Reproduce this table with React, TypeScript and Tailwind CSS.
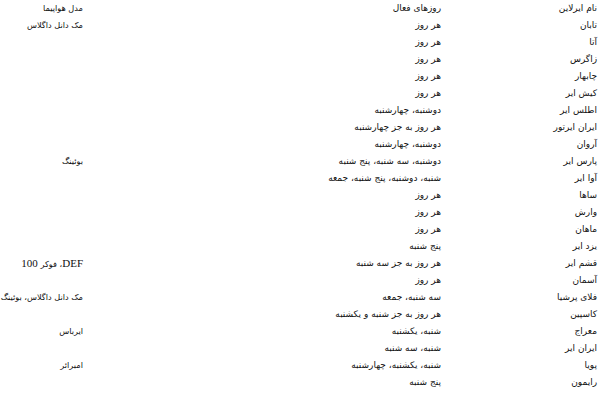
const rows: [string, string, React.ReactNode][] = [
  ["نام ایرلاین", "روزهای فعال", "مدل هواپیما"],
  ["تابان", "هر روز", "مک دانل داگلاس"],
  ["آتا", "هر روز", ""],
  ["زاگرس", "هر روز", ""],
  ["چابهار", "هر روز", ""],
  ["کیش ایر", "هر روز", ""],
  ["اطلس ایر", "دوشنبه، چهارشنبه", ""],
  ["ایران ایرتور", "هر روز به جز چهارشنبه", ""],
  ["آروان", "دوشنبه، چهارشنبه", ""],
  ["پارس ایر", "دوشنبه، سه شنبه، پنج شنبه", "بوئینگ"],
  ["آوا ایر", "شنبه، دوشنبه، پنج شنبه، جمعه", ""],
  ["ساها", "هر روز", ""],
  ["وارش", "هر روز", ""],
  ["ماهان", "هر روز", ""],
  ["یزد ایر", "پنج شنبه", ""],
  [
    "قشم ایر",
    "هر روز به جز سه شنبه",
    <>
      <span className="font-['Liberation_Serif',serif] text-[11px]">DEF</span>، فوکر{" "}
      <span className="font-['Liberation_Serif',serif] text-[11px]">100</span>
    </>,
  ],
  ["آسمان", "هر روز", ""],
  ["فلای پرشیا", "سه شنبه، جمعه", "مک دانل داگلاس، بوئینگ"],
  ["کاسپین", "هر روز به جز شنبه و یکشنبه", ""],
  ["معراج", "شنبه، یکشنبه", "ایرباس"],
  ["ایران ایر", "شنبه، سه شنبه", ""],
  ["پویا", "شنبه، یکشنبه، چهارشنبه", "امبرائر"],
  ["رایمون", "پنج شنبه", ""],
];

export default function App() {
  return (
    <div
      dir="rtl"
      className="w-[600px] h-[400px] overflow-hidden bg-white text-[#111] text-[9px] font-['DejaVu_Sans',sans-serif]"
    >
      {rows.map((r, i) => (
        <div key={i} className="grid grid-cols-[156px_358px_86px] h-[17px] items-center leading-none">
          <div className="pr-[3px] whitespace-nowrap">{r[0]}</div>
          <div className="pr-[3px] whitespace-nowrap">{r[1]}</div>
          <div className="pr-[3px] whitespace-nowrap text-[8.2px]">{r[2]}</div>
        </div>
      ))}
    </div>
  );
}
